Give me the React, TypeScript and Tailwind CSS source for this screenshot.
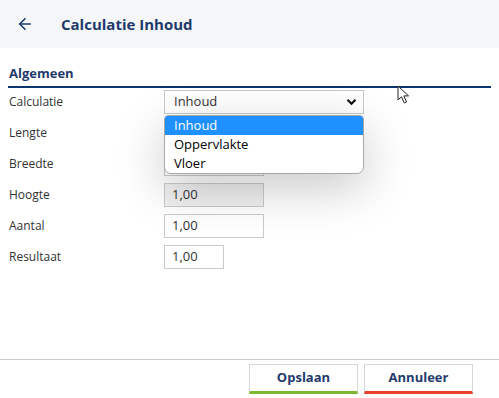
import { ArrowLeft } from "lucide-react";

const rows = [
  { label: "Lengte", value: "", width: "w-[100px]", disabled: false },
  { label: "Breedte", value: "", width: "w-[100px]", disabled: false },
  { label: "Hoogte", value: "1,00", width: "w-[100px]", disabled: true },
  { label: "Aantal", value: "1,00", width: "w-[100px]", disabled: false },
  { label: "Resultaat", value: "1,00", width: "w-[60px]", disabled: false },
];

const options = ["Inhoud", "Oppervlakte", "Vloer"];

function Cursor() {
  return (
    <svg
      className="absolute left-[397px] top-[85px]"
      width="16"
      height="20"
      viewBox="0 0 16 20"
      aria-hidden
    >
      <path
        d="M1 1 L1 15 L4.5 11.8 L7.3 18 L9.6 17 L6.9 10.9 L11.6 10.9 Z"
        fill="white"
        stroke="#222"
        strokeWidth="1"
        strokeLinejoin="round"
      />
    </svg>
  );
}

export default function App() {
  return (
    <div className="relative flex h-[398px] w-[499px] flex-col overflow-hidden bg-white font-['Open_Sans',sans-serif] text-[#333]">
      <header className="flex h-12 shrink-0 items-center bg-[#f5f6f8]">
        <button type="button" className="ml-[16px] text-[#1f3a6b]" aria-label="Terug">
          <ArrowLeft className="h-[18px] w-[18px]" strokeWidth={2.2} />
        </button>
        <h1 className="ml-[27px] text-[15px] font-bold text-[#1f3a6b]">Calculatie Inhoud</h1>
      </header>

      <main className="flex-1 px-2">
        <div className="mt-[16px] border-b-2 border-[#0b3470] pb-[4px] pl-px text-[13px] font-bold leading-[18px] text-[#1f3a6b]">
          Algemeen
        </div>

        <div className="mt-[2px] flex flex-col gap-[7px] pl-px">
          <div className="relative flex h-6 items-center">
            <span className="w-[155px] text-[12px]">Calculatie</span>
            <div className="relative flex h-6 w-[200px] items-center border border-[#c8c8c8] bg-white pl-[9px] pr-[6px] text-[13px] text-[#333]">
              <span className="flex-1">Inhoud</span>
              <svg width="11" height="8" viewBox="0 0 11 8" aria-hidden>
                <path d="M1.5 1.8 L5.5 5.8 L9.5 1.8" fill="none" stroke="#111" strokeWidth="2.2" />
              </svg>
              <ul className="absolute left-[-1px] top-[24px] z-10 w-[200px] overflow-hidden rounded-b-[7px] rounded-t-[4px] border border-[#a8a8a8] bg-white text-[13px] text-black shadow-[0_14px_48px_rgba(0,0,0,0.22)]">
                {options.map((o, i) => (
                  <li
                    key={o}
                    className={`flex h-[19px] items-center pl-[9px] ${i === 0 ? "bg-[#1e90ff] text-white" : ""}`}
                  >
                    {o}
                  </li>
                ))}
              </ul>
            </div>
          </div>

          {rows.map((r) => (
            <div key={r.label} className="flex h-6 items-center">
              <span className="w-[155px] text-[12px]">{r.label}</span>
              <div
                className={`flex h-6 ${r.width} items-center border border-[#c8cbd0] pl-[7px] text-[13px] text-[#333] ${
                  r.disabled ? "bg-[#f0f0f0]" : "bg-white"
                }`}
              >
                {r.value}
              </div>
            </div>
          ))}
        </div>
      </main>

      <footer className="flex h-[39px] shrink-0 justify-end gap-[6px] border-t border-[#cccccc] pr-[26px] pt-[4px]">
        <button
          type="button"
          className="h-[30px] w-[109px] border border-b-[3px] border-[#d3d6da] border-b-[#7cb82f] bg-white text-[13px] font-bold text-[#1f3a6b]"
        >
          Opslaan
        </button>
        <button
          type="button"
          className="h-[30px] w-[109px] border border-b-[3px] border-[#d3d6da] border-b-[#e8412c] bg-white text-[13px] font-bold text-[#1f3a6b]"
        >
          Annuleer
        </button>
      </footer>

      <Cursor />
    </div>
  );
}
